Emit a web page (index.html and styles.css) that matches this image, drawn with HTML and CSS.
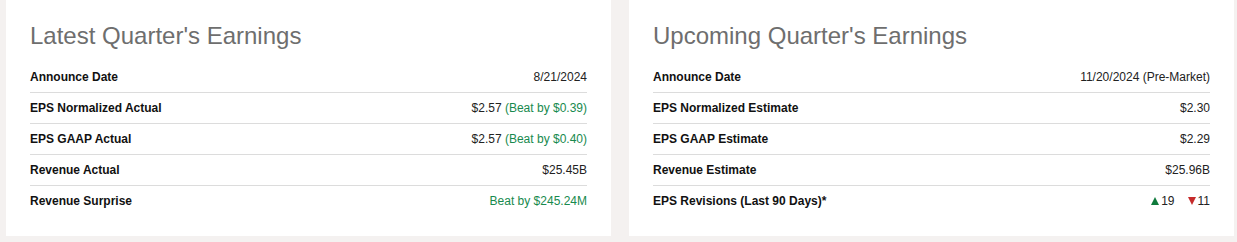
FILE: index.html
```html
<!DOCTYPE html>
<html>
<head>
<meta charset="utf-8">
<link rel="stylesheet" href="styles.css">
</head>
<body>
<div class="page">
  <section class="card">
    <h2 class="title">Latest Quarter's Earnings</h2>
    <div class="rows">
      <div class="row"><span class="label">Announce Date</span><span class="value">8/21/2024</span></div>
      <div class="row"><span class="label">EPS Normalized Actual</span><span class="value">$2.57 <span class="beat">(Beat by $0.39)</span></span></div>
      <div class="row"><span class="label">EPS GAAP Actual</span><span class="value">$2.57 <span class="beat">(Beat by $0.40)</span></span></div>
      <div class="row"><span class="label">Revenue Actual</span><span class="value">$25.45B</span></div>
      <div class="row"><span class="label">Revenue Surprise</span><span class="value beat">Beat by $245.24M</span></div>
    </div>
  </section>
  <section class="card">
    <h2 class="title">Upcoming Quarter's Earnings</h2>
    <div class="rows">
      <div class="row"><span class="label">Announce Date</span><span class="value">11/20/2024 (Pre-Market)</span></div>
      <div class="row"><span class="label">EPS Normalized Estimate</span><span class="value">$2.30</span></div>
      <div class="row"><span class="label">EPS GAAP Estimate</span><span class="value">$2.29</span></div>
      <div class="row"><span class="label">Revenue Estimate</span><span class="value">$25.96B</span></div>
      <div class="row"><span class="label">EPS Revisions (Last 90 Days)*</span><span class="value revs"><span class="rev"><svg class="tri up" width="8" height="8" viewBox="0 0 8 8"><polygon points="4,0 8,8 0,8"/></svg>19</span><span class="rev"><svg class="tri down" width="8" height="8" viewBox="0 0 8 8"><polygon points="0,0 8,0 4,8"/></svg>11</span></span></div>
    </div>
  </section>
</div>
</body>
</html>
```

FILE: styles.css
```css
html, body {
  margin: 0;
  padding: 0;
  background: #f4f1f0;
  font-family: "Liberation Sans", Arial, sans-serif;
}
.page {
  display: flex;
  gap: 18px;
  padding: 0 3px 6px 6px;
  width: 1237px;
  box-sizing: border-box;
}
.card {
  flex: 1 1 0;
  background: #fff;
  padding: 22px 24px 19px 24px;
}
.title {
  margin: 0 0 12px 0;
  font-size: 24px;
  line-height: 28px;
  font-weight: normal;
  color: #6e6e6e;
}
.row {
  display: flex;
  justify-content: space-between;
  align-items: center;
  height: 30px;
  border-bottom: 1px solid #dcdcdc;
  font-size: 12px;
  line-height: 14px;
}
.row:last-child {
  border-bottom: 1px solid transparent;
}
.label {
  font-weight: bold;
  color: #111;
}
.value {
  color: #222;
}
.beat {
  color: #188a4e;
}
.revs {
  display: flex;
  gap: 13px;
}
.rev {
  display: flex;
  align-items: center;
  gap: 2px;
}
.tri {
  display: block;
}
.up {
  fill: #0f7a3c;
}
.down {
  fill: #c62b2b;
}
```
